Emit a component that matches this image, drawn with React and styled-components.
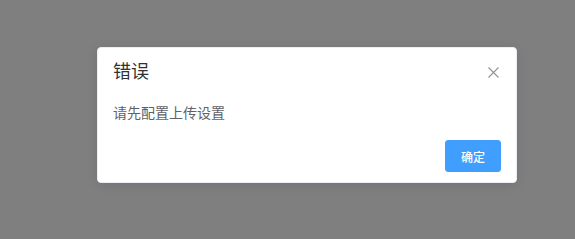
import React from "react";
import styled, { createGlobalStyle } from "styled-components";

const GlobalStyle = createGlobalStyle`
  html, body {
    margin: 0;
    padding: 0;
    background: #7f7f7f;
  }
  body {
    font-family: "Helvetica Neue", "Liberation Sans", "Noto Sans CJK SC", sans-serif;
  }
`;

const Overlay = styled.div`
  width: 575px;
  height: 239px;
  box-sizing: border-box;
  padding: 47px 0 0 97px;
  background: #7f7f7f;
`;

const Box = styled.div`
  position: relative;
  width: 420px;
  box-sizing: border-box;
  padding-bottom: 10px;
  background: #fff;
  border: 1px solid #ebeef5;
  border-radius: 4px;
  box-shadow: 0 2px 12px 0 rgba(0, 0, 0, 0.1);
`;

const Header = styled.div`
  padding: 15px 15px 10px;
`;

const Title = styled.div`
  font-size: 18px;
  line-height: 1;
  color: #303133;
`;

const CloseBtn = styled.button`
  position: absolute;
  top: 18px;
  right: 17px;
  width: 12px;
  height: 12px;
  padding: 0;
  border: none;
  background: transparent;
  cursor: pointer;
  display: flex;
  align-items: center;
  justify-content: center;
`;

const Content = styled.div`
  padding: 10px 15px;
  font-size: 14px;
  line-height: 24px;
  color: #606266;
`;

const Btns = styled.div`
  padding: 5px 15px 0;
  display: flex;
  justify-content: flex-end;
`;

const Button = styled.button`
  height: 32px;
  padding: 0 15px;
  font-family: inherit;
  font-size: 12px;
  font-weight: 500;
  color: #fff;
  background: ${(p) => (p.primary ? "#409eff" : "#fff")};
  border: 1px solid #409eff;
  border-radius: 3px;
  cursor: pointer;
`;

const App = () => {
  return (
    <>
      <GlobalStyle />
      <Overlay>
        <Box>
          <Header>
            <Title>错误</Title>
            <CloseBtn aria-label="Close">
              <svg width="11" height="11" viewBox="0 0 11 11">
                <path d="M0.5 0.5L10.5 10.5M10.5 0.5L0.5 10.5" stroke="#909399" strokeWidth="1.1" />
              </svg>
            </CloseBtn>
          </Header>
          <Content>请先配置上传设置</Content>
          <Btns>
            <Button primary>确定</Button>
          </Btns>
        </Box>
      </Overlay>
    </>
  );
};

export default App;
